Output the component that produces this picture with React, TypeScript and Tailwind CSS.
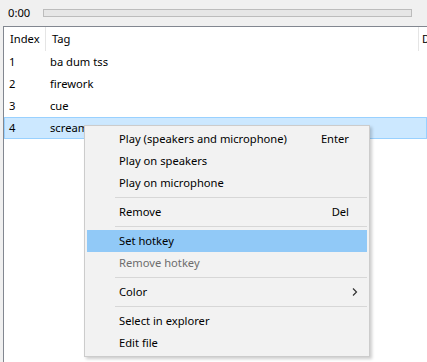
import { ReactNode } from "react"

const rows = [
  { index: 1, tag: "ba dum tss" },
  { index: 2, tag: "firework" },
  { index: 3, tag: "cue" },
  { index: 4, tag: "scream", selected: true },
]

function Chevron() {
  return (
    <svg width="6" height="8" viewBox="0 0 6 8" className="block">
      <path d="M1 0.5 L4.5 4 L1 7.5" fill="none" stroke="#333" strokeWidth="1.2" />
    </svg>
  )
}

function MenuItem({
  label,
  shortcut,
  active,
  disabled,
  submenu,
}: {
  label: string
  shortcut?: string
  active?: boolean
  disabled?: boolean
  submenu?: boolean
}) {
  return (
    <div
      className={`h-[22px] flex items-center pl-[32px] ${active ? "bg-[#91c9f7]" : ""} ${
        disabled ? "text-[#6d6d6d]" : "text-black"
      }`}
    >
      <span className="flex-1">{label}</span>
      {shortcut && <span className="pr-[18px]">{shortcut}</span>}
      {submenu && (
        <span className="pr-[9px]">
          <Chevron />
        </span>
      )}
    </div>
  )
}

function Separator() {
  return (
    <div className="h-[7px] flex items-center pl-[28px]">
      <div className="h-px w-full bg-[#d7d7d7]" />
    </div>
  )
}

function HeaderCell({ children, width }: { children: ReactNode; width: string }) {
  return (
    <div className={`${width} h-full flex items-center border-r border-[#e5e5e5] pl-[6px] shrink-0`}>
      {children}
    </div>
  )
}

export default function App() {
  return (
    <div className="w-[427px] h-[362px] bg-[#f0f0f0] relative overflow-hidden font-['Noto_Sans',sans-serif] text-[11.2px] text-black">
      {/* playback bar */}
      <div className="h-[26px] flex items-center">
        <span className="pl-[8px] w-[43px]">0:00</span>
        <div className="w-[369px] h-[8px] border border-[#bcbcbc] bg-[#e6e6e6]" />
      </div>

      {/* list view */}
      <div className="ml-[3px] h-[336px] border-l border-t border-[#828790] bg-white">
        <div className="h-[24px] flex">
          <HeaderCell width="w-[42px]">Index</HeaderCell>
          <HeaderCell width="w-[373px]">Tag</HeaderCell>
          <div className="pl-[3px] flex items-center">D</div>
        </div>
        {rows.map((r) => (
          <div
            key={r.index}
            className={`h-[22px] flex items-center border ${
              r.selected ? "bg-[#cce8ff] border-[#99d1ff]" : "border-transparent"
            }`}
          >
            <span className="w-[42px] pl-[4px]">{r.index}</span>
            <span className="pl-[3px]">{r.tag}</span>
          </div>
        ))}
      </div>

      {/* context menu */}
      <div className="absolute left-[84px] top-[125px] w-[286px] border border-[#cccccc] bg-[#f2f2f2] p-[2px] shadow-[2px_2px_3px_rgba(0,0,0,0.2)]">
        <MenuItem label="Play (speakers and microphone)" shortcut="Enter" />
        <MenuItem label="Play on speakers" />
        <MenuItem label="Play on microphone" />
        <Separator />
        <MenuItem label="Remove" shortcut="Del" />
        <Separator />
        <MenuItem label="Set hotkey" active />
        <MenuItem label="Remove hotkey" disabled />
        <Separator />
        <MenuItem label="Color" submenu />
        <Separator />
        <MenuItem label="Select in explorer" />
        <MenuItem label="Edit file" />
      </div>
    </div>
  )
}
